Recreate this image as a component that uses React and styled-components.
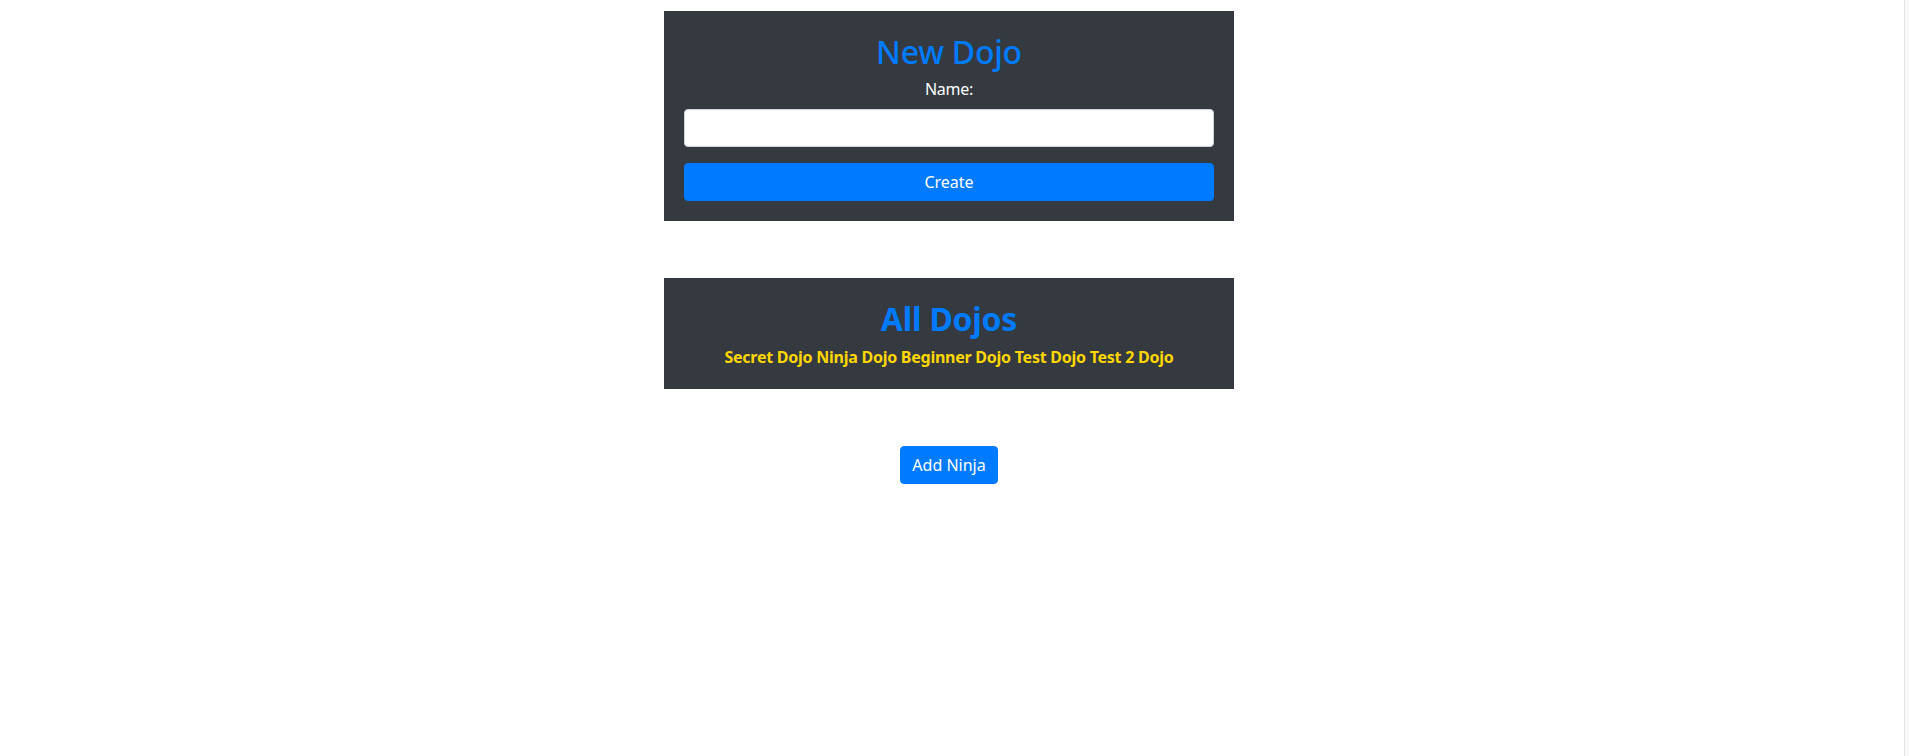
import React, {useState} from "react";
import styled, {createGlobalStyle} from 'styled-components'

const GlobalStyle = createGlobalStyle`
  html, body {
    margin: 0;
    padding: 0;
    background: #fff;
  }
  body {
    font-family: "Noto Sans", "Open Sans", Arial, sans-serif;
    font-size: 16px;
    line-height: 1.5;
    letter-spacing: -0.25px;
    color: #212529;
  }
  * { box-sizing: border-box; }
`

export default function App(){
  const [name, setName] = useState('')
  const dojos = ['Secret Dojo', 'Ninja Dojo', 'Beginner Dojo', 'Test Dojo', 'Test 2 Dojo']

  return(
    <Page>
      <GlobalStyle/>
      <Main>
        <Panel>
          <Title>New Dojo</Title>
          <Label htmlFor='dojo-name'>Name:</Label>
          <Input id='dojo-name' value={name} onChange={(e)=>setName(e.target.value)}/>
          <Button block>Create</Button>
        </Panel>

        <Panel>
          <Title bold>All Dojos</Title>
          <DojoList>{dojos.join(' ')}</DojoList>
        </Panel>

        <Button>Add Ninja</Button>
      </Main>
      <ScrollTrack/>
    </Page>
  )
}

const Page = styled.div`
  display: flex;
  min-height: 756px;
`

const Main = styled.div`
  flex: 1;
  display: flex;
  flex-direction: column;
  align-items: center;
  gap: 57px;
  padding: 11px 6px 0 0;
`

const ScrollTrack = styled.div`
  width: 5px;
  background: #f9f9f9;
  border-left: 1px solid #e4e4e4;
`

const Panel = styled.div`
  width: 570px;
  background: #343a40;
  padding: 20px;
  display: flex;
  flex-direction: column;
  align-items: center;
`

const Title = styled.h2`
  margin: 0 0 6px;
  padding-top: 2px;
  font-size: 32px;
  line-height: 1.2;
  font-weight: ${props=>props.bold ? 700 : 500};
  color: #007bff;
`

const Label = styled.label`
  color: #fff;
  font-size: 16px;
  line-height: 24px;
  margin-bottom: 8px;
`

const Input = styled.input`
  width: 100%;
  height: 38px;
  margin: 0 0 16px;
  padding: 6px 12px;
  font: inherit;
  background: #fff;
  border: 1px solid #ced4da;
  border-radius: 4px;
  outline: none;
`

const Button = styled.button`
  width: ${props=>props.block ? '100%' : 'auto'};
  height: 38px;
  padding: 6px 11px;
  font: inherit;
  font-size: 16px;
  line-height: 24px;
  color: #fff;
  background: #007bff;
  border: 1px solid #007bff;
  border-radius: 4px;
  cursor: pointer;
`

const DojoList = styled.p`
  margin: 0;
  color: #ffd700;
  font-weight: 700;
  font-size: 16px;
  line-height: 24px;
  text-align: center;
`
